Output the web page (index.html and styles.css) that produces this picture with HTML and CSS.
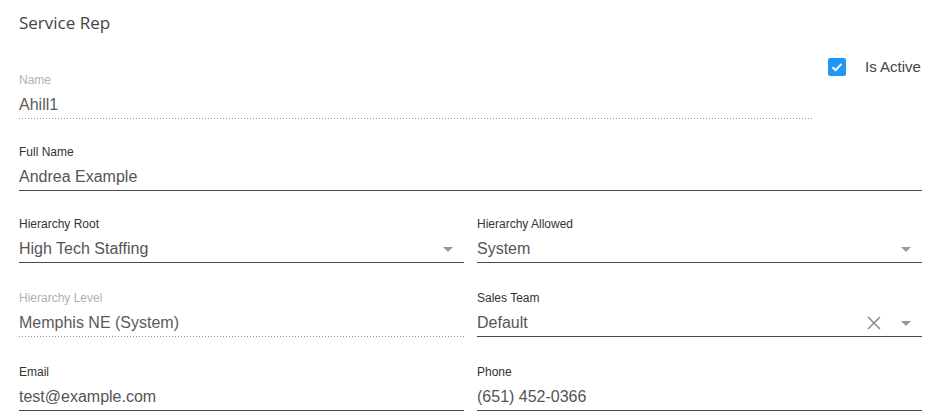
FILE: index.html
```html
<!DOCTYPE html>
<html>
<head>
<meta charset="utf-8">
<link rel="stylesheet" href="styles.css">
</head>
<body>
<div class="page">
  <h1 class="title">Service Rep</h1>

  <div class="row top-row">
    <div class="field name-field disabled">
      <div class="label">Name</div>
      <div class="input">Ahill1</div>
    </div>
    <label class="check">
      <span class="box">
        <svg width="14" height="14" viewBox="0 0 14 14"><path d="M2.5 7.2 L5.6 10.2 L11.6 3.9" fill="none" stroke="#fff" stroke-width="2"/></svg>
      </span>
      <span class="check-text">Is Active</span>
    </label>
  </div>

  <div class="row">
    <div class="field">
      <div class="label">Full Name</div>
      <div class="input">Andrea Example</div>
    </div>
  </div>

  <div class="row two">
    <div class="field">
      <div class="label">Hierarchy Root</div>
      <div class="input select">High Tech Staffing<span class="arrow"></span></div>
    </div>
    <div class="field">
      <div class="label">Hierarchy Allowed</div>
      <div class="input select">System<span class="arrow"></span></div>
    </div>
  </div>

  <div class="row two wide">
    <div class="field disabled">
      <div class="label">Hierarchy Level</div>
      <div class="input">Memphis NE (System)</div>
    </div>
    <div class="field">
      <div class="label">Sales Team</div>
      <div class="input select">Default
        <svg class="clear" width="14" height="14" viewBox="0 0 14 14"><path d="M1 1 L13 13 M13 1 L1 13" stroke="#888" stroke-width="1.5" fill="none"/></svg>
        <span class="arrow"></span>
      </div>
    </div>
  </div>

  <div class="row two wide">
    <div class="field">
      <div class="label">Email</div>
      <div class="input">test@example.com</div>
    </div>
    <div class="field">
      <div class="label">Phone</div>
      <div class="input">(651) 452-0366</div>
    </div>
  </div>
</div>
</body>
</html>
```

FILE: styles.css
```css
* { box-sizing: border-box; }
html, body { margin: 0; padding: 0; background: #fff; }
body { font-family: "Liberation Sans", Arial, sans-serif; }

.page {
  padding: 12px 21px 0 19px;
}

.title {
  margin: 0;
  font-family: "Open Sans", "Noto Sans", sans-serif;
  font-weight: 400;
  font-size: 17px;
  line-height: 22px;
  color: #444;
}

.row {
  display: flex;
  margin-top: 26px;
}
.row.wide { margin-top: 28px; }
.row.two { gap: 13px; }
.row.two .field { flex: 1 1 0; }

.top-row {
  margin-top: 24px;
  align-items: flex-start;
}
.top-row .name-field {
  margin-top: 15px;
  flex: 0 0 793px;
}

.field { flex: 1 1 auto; min-width: 0; }

.label {
  font-size: 12px;
  line-height: 14px;
  color: #333;
}
.input {
  margin-top: 9px;
  font-size: 16px;
  line-height: 18px;
  color: #555;
  padding-bottom: 4px;
  border-bottom: 1px solid #4a4a4a;
  position: relative;
  white-space: nowrap;
}
.disabled .label { color: #b0b0b0; }
.disabled .input {
  color: #5a5a5a;
  border-bottom: none;
  padding-bottom: 5px;
  background-image: linear-gradient(to right, #999 34%, rgba(255,255,255,0) 34%);
  background-position: left bottom;
  background-size: 3px 1px;
  background-repeat: repeat-x;
}

.select .arrow {
  position: absolute;
  right: 11px;
  top: 7px;
  width: 0; height: 0;
  border-left: 5px solid transparent;
  border-right: 5px solid transparent;
  border-top: 5px solid #999;
}
.select .clear {
  position: absolute;
  right: 41px;
  top: 2px;
}

.check {
  display: flex;
  align-items: center;
  margin-left: 16px;
}
.box {
  width: 18px; height: 18px;
  border-radius: 2px;
  background: #2196f3;
  display: flex;
  align-items: center;
  justify-content: center;
}
.box svg { display: block; }
.check-text {
  margin-left: 19px;
  font-size: 15px;
  line-height: 18px;
  color: #444;
}
```
